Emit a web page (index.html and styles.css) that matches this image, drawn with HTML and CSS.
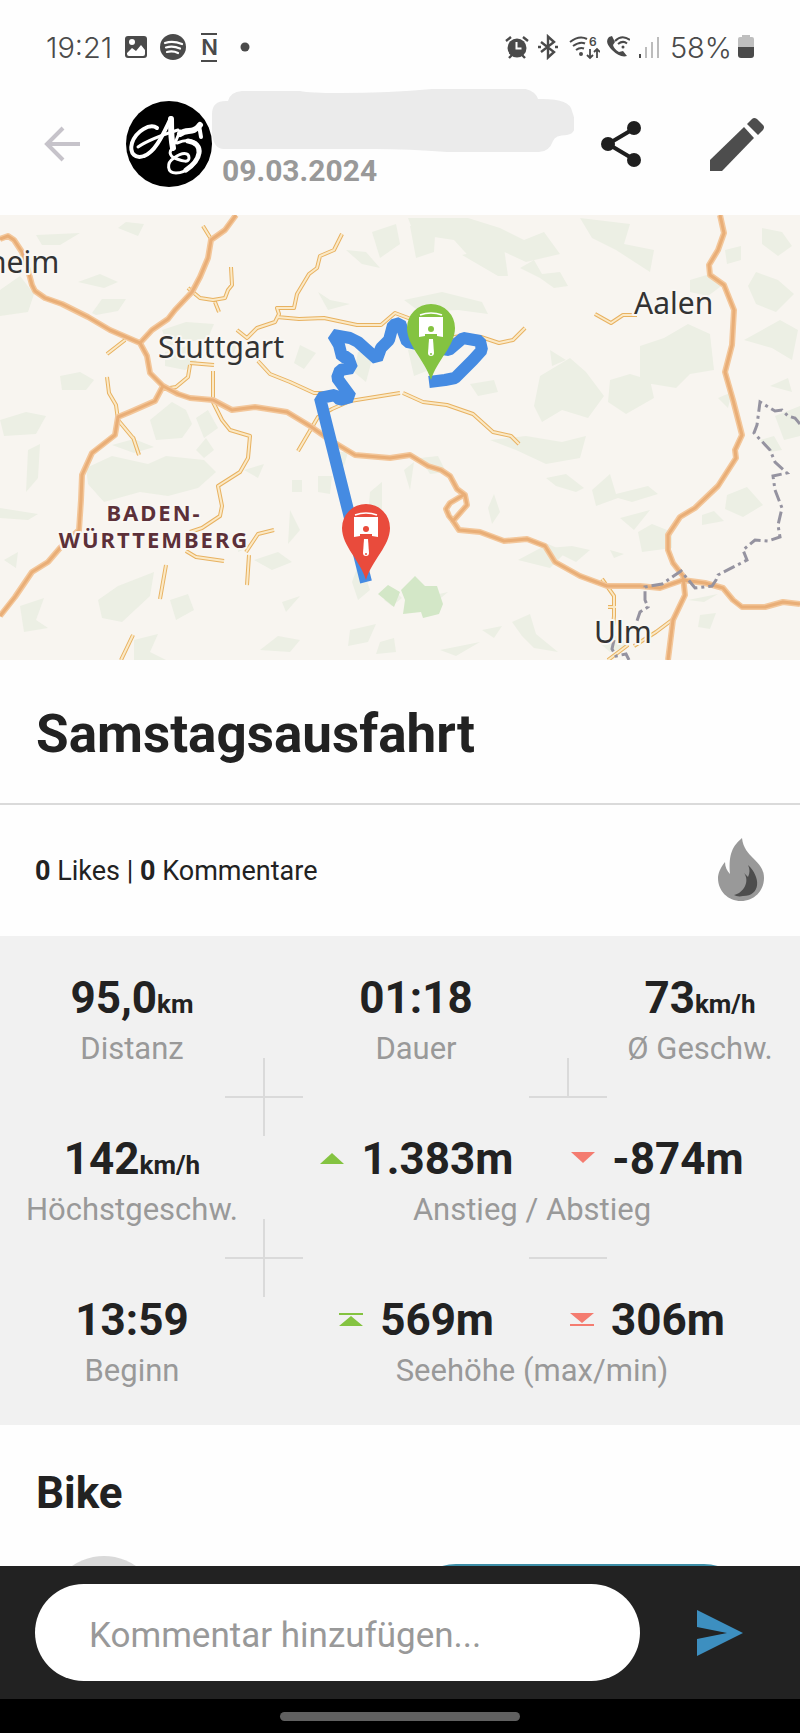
FILE: index.html
```html
<!DOCTYPE html>
<html lang="de">
<head>
    <meta charset="UTF-8">
    <meta name="viewport" content="width=device-width, initial-scale=1.0">
    <title>Samstagsausfahrt</title>
    <link rel="stylesheet" href="styles.css">
</head>
<body>

    <div class="status-bar">
        <div class="status-group status-left">
            <span class="status-text">19:21</span>
            <svg width="26" height="26" viewBox="0 0 26 26">
                <rect x="2" y="2" width="22" height="22" rx="3" fill="#4a4a4a"/>
                <circle cx="9" cy="8" r="3" fill="#fff"/>
                <path d="M4 19l5-5 4 3 5-6 4 5v4q0 2-2 2H6q-2 0-2-2z" fill="#fff"/>
            </svg>
            <svg width="26" height="26" viewBox="0 0 26 26">
                <circle cx="13" cy="13" r="13" fill="#4a4a4a"/>
                <path d="M5 9q8-2.500 17 1M6 13.500q7-2 14 1M7 18q6-1.500 11 1" fill="none" stroke="#fff" stroke-width="2.200" stroke-linecap="round"/>
            </svg>
            <span class="n-icon">N</span>
            <svg width="26" height="26" viewBox="0 0 26 26"><circle cx="13" cy="13" r="4.500" fill="#4a4a4a"/></svg>
        </div>
        <div class="status-group status-right">
            <svg width="26" height="26" viewBox="0 0 26 26">
                <circle cx="13" cy="14" r="9.500" fill="#4a4a4a"/>
                <path d="M2 7l5-4M24 7l-5-4M5 24l3-3M21 24l-3-3" stroke="#4a4a4a" stroke-width="2.400"/>
                <path d="M12.500 8v6.500h5" fill="none" stroke="#fff" stroke-width="2"/>
            </svg>
            <svg width="24" height="26" viewBox="0 0 24 26" fill="none" stroke="#4a4a4a" stroke-width="2.400">
                <path d="M5 8l13 10-6 5.500v-21L18 8 5 18"/>
                <path d="M2 13h3M19 13h3"/>
            </svg>
            <svg width="34" height="26" viewBox="0 0 34 26" fill="none" stroke="#4a4a4a" stroke-width="2">
                <path d="M4 8q9-7 17-3M7 12q7-5 12-2.500M10 16q4-3 8-1.500"/>
                <circle cx="15" cy="20" r="1" fill="#4a4a4a"/>
                <path d="M24 15v9M21 21l3 3 3-3M31 24v-9M28 18l3-3 3 3" stroke-width="1.800"/>
                <text x="23" y="12" class="wifi-gen">6</text>
            </svg>
            <svg width="24" height="26" viewBox="0 0 24 26">
                <path d="M3 3q-5 5 3 13t15 6l-4-5-4 1q-5-3-6-7l2-3-3-6z" fill="#4a4a4a"/>
                <path d="M9 7q7-7 15-1M12 10q5-4 9-.500" fill="none" stroke="#4a4a4a" stroke-width="2"/>
                <circle cx="17" cy="13" r="1.500" fill="#4a4a4a"/>
            </svg>
            <svg width="28" height="26" viewBox="0 0 28 26">
                <rect x="3" y="20" width="2" height="4" fill="#4a4a4a"/>
                <path d="M10 13v11M16 8v16M22 3v21" stroke="#bcbcbc" stroke-width="2"/>
            </svg>
            <span class="status-text">58%</span>
            <svg width="16" height="26" viewBox="0 0 16 26">
                <path d="M0 14V5q0-2 2-2h2V1h8v2h2q2 0 2 2v9z" fill="#bfbfbf"/>
                <path d="M0 13h16v8q0 3-3 3H3q-3 0-3-3z" fill="#4a4a4a"/>
            </svg>
        </div>
    </div>

    <header class="header">
        <button class="icon-button" aria-label="Zurück">
            <svg width="36" height="36" viewBox="0 0 36 36" fill="none" stroke="#c6c3ca" stroke-width="4">
                <path d="M36 18H3M19 2L3 18l16 16"/>
            </svg>
        </button>
        <svg class="avatar" width="86" height="86" viewBox="0 0 86 86">
            <circle cx="43" cy="43" r="43" fill="#000"/>
            <g fill="none" stroke="#fff" stroke-linecap="round" stroke-linejoin="round">
                <path d="M31 27C24 22 10 30 6 42c-3 11 4 16 12 13C30 51 38 31 45 17" stroke-width="4"/>
                <path d="M45 18c0 10 0 20 2 29" stroke-width="6"/>
                <path d="M12 46c10-7 24-12 40-17" stroke-width="3"/>
                <path d="M54 30l-5 12" stroke-width="3"/>
                <path d="M54 33c8-6 12 1 20-9" stroke-width="6"/>
                <path d="M73 24l2 12" stroke-width="4"/>
                <path d="M51 42c12-5 22-2 22 8 0 12-13 22-23 22-9 0-10-10-2-15 8-6 15-6 15 0 0 5-7 3-12 1-7-2-9-7-4-11" stroke-width="3"/>
                <path d="M62 40c8 1 12 6 11 12-1 7-7 13-13 17" stroke-width="5"/>
            </g>
        </svg>
        <div class="user">
            <svg width="362" height="64" viewBox="0 0 362 64">
                <path d="M16 12Q18 3 30 2l58 0q10 2 40 2 50 0 92-4l80-1q22-1 26 11 32-1 34 12 8 22-5 24-12 0-14 6-4 11-14 11l-92 0q-38-3-72-3H13Q2 61 0 45V25Q0 11 16 12z" fill="#ebebeb"/>
            </svg>
            <span class="date">09.03.2024</span>
        </div>
        <button class="icon-button" aria-label="Teilen">
            <svg width="40" height="46" viewBox="0 0 40 46" fill="#1f1f1f">
                <path d="M34 7L7 23l27 16" fill="none" stroke="#1f1f1f" stroke-width="4"/>
                <circle cx="33" cy="7" r="7"/>
                <circle cx="7" cy="23" r="7"/>
                <circle cx="33" cy="39" r="7"/>
            </svg>
        </button>
        <button class="icon-button" aria-label="Bearbeiten">
            <svg width="54" height="54" viewBox="0 0 54 54" fill="#4d4d4d">
                <path d="M0 43L34 10l10 11L12 54H0z"/>
                <path d="M37 7l5-5q2-2 5 0l6 6q2 2 0 5l-5 5z"/>
            </svg>
        </button>
    </header>

    <main class="content">
        <svg class="map" viewBox="0 215 800 445">
            <defs>
                <!-- country roads -->
                <g id="minor">
                    <path d="M203 226l8 13M188 288l12 10 13 2 12-2 3-8 4-5-1-18M215 302l4 10M237 330l10 8 10-10 18-6 4-8-2-6h17l3-14 12-20 8-6 3-12 14-6 8-16M277 317l22 2 25-1 33 7h24l14-12 16 6 10 10 20 10 20-3 20 1 18 6 14-3 12-12"/>
                    <path d="M595 314l16 9 12-8 14 0M107 354l18-14M107 377l2 16 7 12 2 15 15 18M213 371l0 31 9 18 8 10 20 6-2 22-8 14-22 14 4 20-2 10-18 12-12 4M190 365l-2 12-12 10-12 2M190 363l24 2M258 361l12 13 20 8 24 11 8 0 6 0M400 393l-50 8-18 8-14 8-20 34M403 393l20 9 24 3 26 9 20 18 18 4 8 8M133 437l6 18M166 565l-6 34M133 635l-12 25M186 551l10 6 28 4M246 552l12-18 16-4M249 555l-2 30"/>
                    <path d="M602 579l12 17 0 20-2 20M608 607h8M672 620l-16 12-22 14M628 645l-20 15"/>
                </g>
                <!-- motorways -->
                <g id="major">
                    <path d="M0 239l8-3 6 4 8 12 6 18 4 15 3 6 10 7 17 6 26 13 22 13 30 13 7 13 3 17 13 13 15 8 12 4 23 2 19 10 23-3 32 5 23 14 20 14 25 15 35 3 20-3 18 11 13 4 9 6 7 13 8 6 2 10-7 8-7 8 6 9 21 2 24 9 23-2 18 7 10 16 25 14 27 10h33l20 2 23-8 22 3 18 5 10 12 9 7h23l18-5 17 2"/>
                    <path d="M465 494l-15 9-4 6 3 7 4 5M236 215l-11 15-14 10-3 18-8 19-8 15-17 18-7 9-16 11-12 13M163 386l-8 15-25 11-12 5-3 18-23 18-10 22-1 25-2 30-19 18-12 14-16 10-17 25-15 19"/>
                    <path d="M720 215l4 18-6 17-9 15 1 10 14 10 10 25-2 35-7 27 8 28 9 35-7 15 1 8-18 28-23 22-15 9-12 18v15l5 13 10 13 2 19-12 25-5 40"/>
                </g>
                <g id="piston" fill="#fff">
                    <path d="M419 317h24v20l-6-1v-2h-12v2l-6 1z"/>
                    <path d="M420 315q11-4 22 0" fill="none" stroke="#fff" stroke-width="1.500"/>
                    <path d="M429 339h4l1 14a3 3 0 1 1-6 0z"/>
                </g>
            </defs>

            <rect x="0" y="215" width="800" height="445" fill="#f8f5f0"/>

            <!-- woods -->
            <g fill="#ecefe4">
                <path d="M0 290l20-14 14 18-6 18-28 4zM36 235l44-2-20 12h-18zM78 282l22-8 18 8-14 6zM92 313l10-14 24 0-8 12-22 4zM118 228l8-6 18 2-6 12z"/>
                <path d="M162 330l24-8 28 2-6 14-40 8zM165 352l22-6 10 16-12 8-20-4zM150 420l22-18 14 8 6 14-10 14-26 2zM196 418l12-8 10 18-14 10zM0 420l26-8 20 4-10 18-32 2zM60 376l20-4 14 8-8 10-24 0z"/>
                <path d="M86 468l26-12 36 8 18-8 38 4 12 12-18 16-30 8-28-4-36 10-16-18zM112 445l22-6 20 8-20 6zM28 450l12-6-2 34-12 14zM0 508l38 6-10 6-28-2zM98 600l20-14 36-14-4 24-28 26-20-4zM20 606l24-8-8 22 12 8-24 4zM134 640l24-6-8 18 16 8h-32zM170 600l18-6 6 16-18 10zM4 560l14-8-2 16z"/>
                <path d="M254 560l24-8 14 10-20 8zM282 602l18-6-14 16zM290 510l10 20-12 14zM292 480h10v12h-10zM318 476l14 0-2 18-12-2zM318 292l12 8 20 4-22 6zM346 250l20 2 14 16-18-4zM372 232l24-8 4 20-20 14zM358 352l16 0-8 30-12-10zM336 452l12 0-4 14-8-4zM370 492l12-10 0 28-14 6zM350 630l26-6-8 18-20 4zM260 650l18-14 22 4-10 12z"/>
                <path d="M408 218l60 0 32 10 24 12 20-8 16 22-34 8-26-12-26 12-20-22-40-6zM580 218l50 6-6 20 30 6-4 22-34-22-24-12zM410 226l26-6-2 32-18 6zM462 255l20-5 14-12 8 10 4 28-10 0zM520 268l14-8 8 14 18-2 8 14-14 2-14-10zM404 300l38-8 40 10 6 12-30-4-38 2z"/>
                <path d="M408 350l20-8 14 6-8 20-20 8zM470 384l24-4 4 12-20 4zM540 376l30-18 16 14 18 24-16 22-26-8-20 12-8-16zM640 346l24-8 24-14 22 10 4 36-24 4-14 14-36-6zM610 380l20-6 20 6 4 18-28 16-18-12zM550 350l16 10-14 6zM725 250l16-4v14l-14 4zM690 280l20-6 14 10-16 12-18-4zM756 272l22 8 16 14-18 18-20-8-8-18zM744 340l36-20 18 10-6 30-20-12zM762 228l20 4 10 14-14 10-16-12zM775 416l25-10v30l-16 4z"/>
                <path d="M490 440l36-4 36 6 24-6-6 22-34 6-30-14zM546 478l20-4 18 14-8 4-20-6zM592 490l18-16 6 20 32-8 10 8-26 8-14-4-22 8zM620 518l30-8-16 20zM638 532l14-8 20 8 0 16-30 4zM727 495l20-8 16 18-20 12-18-8zM702 515l12-4 10 10-22 4zM688 600l30-6-14 8-16-2zM700 615l16-2-6 16-12-2zM518 560l30-16 18 8-16 16zM548 548l24-2 18 4-14 12zM404 470l10-8-4 28zM420 458l18-2 8 16-16 2zM488 508l6-14 6 18-8 12zM482 630l20-4-8 12zM512 622l18-8 6 20 22 18-24-4-12-12zM440 650l40-8-24 14zM610 550l14 4-10 4z"/>
                <path d="M196 450l10-12 8 12-10 8zM244 470l20-6-6 14zM240 540l12 6-14 6zM360 560l10 30-12 10-6-18zM384 600l10-10 8 8-10 8zM430 596l18-4-12 10zM380 642l14-4 2 14-20 2zM596 640l20-4 14 10-20 6zM718 398l14-6-4 16zM770 386l18-8 4 14zM760 440l14-4 8 14-12 2zM300 345l16 8-12 16-10-6zM224 342l14 0-6 16z"/>
            </g>
            <path d="M378 594l10-9 12 7-6 15zM401 590l14-14 10 10 12 0 6 18-4 10-16 4-2-6-18 2 2-14z" fill="#d3e7c7"/>

            <use href="#minor" class="road road-edge"/>
            <use href="#minor" class="road road-core"/>
            <use href="#major" class="road motorway-edge"/>
            <use href="#major" class="road motorway-core"/>

            <path class="border" d="M800 424L795 418 788 416 782 410 775 411 760 402 757 425 754 433 770 450 775 462 787 473 773 476 775 490 782 508 778 525 780 537 768 541 755 540 743 550 747 560 718 575 716 580 712 586 695 588 681 571 662 584 645 587 645 600 648 607 640 612 636 624M614 640L612 649 616 656 626 654 629 660"/>

            <path class="route" d="M366 582L320 398 335 395 340 400 351 397 337 378 340 370 352 368 348 357 342 357 339 345 333 335 350 338 358 342 377 359 381 348 389 340 393 325 400 323 407 342 430 347 449 350 463 338 480 341 482 350 473 360 466 367 455 378 445 380 429 382"/>

            <g class="city">
                <text x="-12" y="273">heim</text>
                <text x="158" y="358">Stuttgart</text>
                <text x="634" y="314">Aalen</text>
                <text x="594" y="643">Ulm</text>
            </g>
            <g class="region">
                <text x="154" y="521">BADEN-</text>
                <text x="154" y="548">WÜRTTEMBERG</text>
            </g>

            <path d="M431 380C425 360 407 346 407 328a24 24 0 0 1 48 0C455 346 437 360 431 380z" fill="#84c341"/>
            <path d="M366 580C360 560 342 546 342 528a24 24 0 0 1 48 0C390 546 372 560 366 580z" fill="#e94b3c"/>
            <use href="#piston"/>
            <use href="#piston" x="-65" y="200"/>
            <circle cx="431" cy="329" r="3" fill="#84c341"/>
            <circle cx="431" cy="354" r="1" fill="#84c341"/>
            <circle cx="366" cy="529" r="3" fill="#e94b3c"/>
            <circle cx="366" cy="554" r="1" fill="#e94b3c"/>
        </svg>

        <div class="title-box">
            <h1>Samstagsausfahrt</h1>
        </div>

        <div class="likes">
            <span><b>0</b> Likes | <b>0</b> Kommentare</span>
            <button class="icon-button" aria-label="Like">
                <svg width="48" height="65" viewBox="0 0 48 65">
                    <path d="M25 0C13 10 12 20 13 36 10 33 8 29 8 24 3 30 1 36 1 40c0 13 10 23 23 23s23-10 23-23C47 22 27 20 25 0z" fill="#999"/>
                    <path d="M31 27c13 12 13 31-5 31-4 1-7 0-9-1 10-2 16-14 10-22l4 4c2-4 2-8 0-12z" fill="#4d4d4d"/>
                </svg>
            </button>
        </div>

        <div class="stats">
            <div class="stat cross">
                <p class="value">95,0<small>km</small></p>
                <p class="label">Distanz</p>
            </div>
            <div class="stat cross half">
                <p class="value">01:18</p>
                <p class="label">Dauer</p>
            </div>
            <div class="stat stat-last">
                <p class="value">73<small>km/h</small></p>
                <p class="label">Ø Geschw.</p>
            </div>

            <div class="stat cross">
                <p class="value">142<small>km/h</small></p>
                <p class="label">Höchstgeschw.</p>
            </div>
            <div class="stat wide line">
                <div class="pair">
                    <p class="value"><svg width="24" height="14" viewBox="0 0 24 14"><path d="M0 12L12 1l12 11z" fill="#84c341"/></svg>1.383m</p>
                    <p class="value"><svg width="24" height="14" viewBox="0 0 24 14"><path d="M0 0h24L12 11z" fill="#f47c70"/></svg>-874m</p>
                </div>
                <p class="label">Anstieg / Abstieg</p>
            </div>

            <div class="stat">
                <p class="value">13:59</p>
                <p class="label">Beginn</p>
            </div>
            <div class="stat wide">
                <div class="pair pair-height">
                    <p class="value"><svg width="24" height="14" viewBox="0 0 24 14" fill="#84c341"><path d="M0 0h24v2H0zM0 13L12 3l12 10z"/></svg>569m</p>
                    <p class="value"><svg width="24" height="14" viewBox="0 0 24 14" fill="#f47c70"><path d="M0 0h24L12 10zM0 11h24v2H0z"/></svg>306m</p>
                </div>
                <p class="label">Seehöhe (max/min)</p>
            </div>
        </div>

        <div class="bike">
            <h2>Bike</h2>
            <div class="bike-row">
                <div class="bike-image"></div>
                <div class="bike-action"></div>
            </div>
        </div>
    </main>

    <form class="comment-bar">
        <input type="text" placeholder="Kommentar hinzufügen..." aria-label="Kommentar hinzufügen">
        <button type="button" class="icon-button" aria-label="Senden">
            <svg width="46" height="46" viewBox="0 0 46 46"><path d="M0 0l46 23L0 46V29l30-6-30-6z" fill="#3d8fc0"/></svg>
        </button>
    </form>
    <div class="nav-bar"><div class="nav-pill"></div></div>

</body>
</html>
```

FILE: styles.css
```css
* {
    box-sizing: border-box;
}

body {
    font-family: Roboto, sans-serif;
    background-color: #fefefe;
    color: #222;
    margin: 0;
    height: 100vh;
    display: flex;
    flex-direction: column;
}

h1, h2, p {
    margin: 0;
}

svg {
    display: block;
    flex-shrink: 0;
}

.icon-button {
    background: none;
    border: none;
    padding: 0;
    cursor: pointer;
}

/* status bar */
.status-bar {
    display: flex;
    justify-content: space-between;
    padding: 30px 46px 20px;
    font-family: Inter, sans-serif;
    color: #4a4a4a;
}

.status-group {
    display: flex;
    align-items: center;
    height: 34px;
}

.status-left {
    gap: 11px;
}

.status-right {
    gap: 6px;
}

.status-text {
    font-size: 29px;
    font-weight: 300;
}

.n-icon {
    width: 16px;
    margin: 0 4px;
    border-top: 2px solid #4a4a4a;
    border-bottom: 2px solid #4a4a4a;
    font-size: 22px;
    font-weight: 600;
    line-height: 25px;
    text-align: center;
}

.wifi-gen {
    font-size: 12px;
    font-weight: 600;
    fill: #4a4a4a;
    stroke: none;
}

/* header */
.header {
    display: flex;
    align-items: center;
    padding: 5px 36px 16px 44px;
}

.avatar {
    margin-left: 46px;
}

.user {
    flex: 1;
    padding-bottom: 10px;
}

.date {
    display: block;
    padding-left: 10px;
    font-size: 30px;
    font-weight: 700;
    line-height: 36px;
    color: #999;
}

.header .icon-button:last-child {
    margin-left: 69px;
}

/* page content */
.content {
    flex: 1;
    min-height: 0;
    overflow-y: auto;
    scrollbar-width: none;
}

.map {
    width: 100%;
    height: auto;
}

.road {
    fill: none;
    stroke-linejoin: round;
}

.road-edge {
    stroke: #e8b261;
    stroke-width: 4px;
}

.road-core {
    stroke: #fbe9c6;
    stroke-width: 2px;
}

.motorway-edge {
    stroke: #f3c79b;
    stroke-width: 6px;
}

.motorway-core {
    stroke: #e9ae77;
    stroke-width: 3px;
}

.border {
    fill: none;
    stroke: #9593a0;
    stroke-width: 3px;
    stroke-dasharray: 12 4 3 4;
}

.route {
    fill: none;
    stroke: #458be2;
    stroke-width: 12px;
    stroke-linejoin: bevel;
}

.city, .region {
    font-family: "Noto Sans", sans-serif;
    paint-order: stroke;
    stroke: #f9f7f3;
    stroke-width: 4px;
    stroke-linejoin: round;
}

.city {
    font-size: 30px;
    fill: #333;
}

.region {
    font-size: 22px;
    font-weight: 700;
    letter-spacing: 2px;
    text-anchor: middle;
    fill: #5c3039;
}

.title-box {
    padding: 42px 36px 37px;
    border-bottom: 2px solid #dadada;
}

h1 {
    font-size: 53px;
    line-height: 64px;
}

.likes {
    display: flex;
    justify-content: space-between;
    align-items: center;
    padding: 33px 35px;
    font-size: 27px;
}

/* stats */
.stats {
    display: grid;
    grid-template-columns: 33fr 38fr 29fr;
    padding-bottom: 6px;
    background: #f1f1f1;
    text-align: center;
}

.stat {
    position: relative;
    padding: 36px 0 30px;
    white-space: nowrap;
}

.stat-last {
    padding-left: 32px;
}

.wide {
    grid-column: span 2;
}

.value {
    font-size: 44px;
    font-weight: 700;
    line-height: 52px;
}

.value small {
    font-size: 26px;
    line-height: 26px;
}

.label {
    margin-top: 7px;
    font-size: 31px;
    line-height: 36px;
    color: #999;
}

.pair {
    display: flex;
    justify-content: center;
    gap: 58px;
}

.pair-height {
    gap: 76px;
}

.pair .value {
    display: flex;
    align-items: center;
    gap: 17px;
}

/* grid marks between the cells */
.cross::before, .line::before {
    content: "";
    position: absolute;
    right: -39px;
    bottom: -1px;
    width: 78px;
    height: 2px;
    background: #dadada;
}

.line::before {
    right: 193px;
}

.cross::after {
    content: "";
    position: absolute;
    right: -1px;
    bottom: -39px;
    width: 2px;
    height: 78px;
    background: #dadada;
}

.half::after {
    bottom: 0;
    height: 39px;
}

/* bike */
.bike {
    padding-top: 42px;
}

h2 {
    padding: 0 36px;
    font-size: 44px;
    line-height: 52px;
}

.bike-row {
    display: flex;
    justify-content: space-between;
    margin-top: 37px;
    padding: 0 48px;
}

.bike-image {
    width: 112px;
    height: 112px;
    border-radius: 50%;
    background: #d9d9d9;
}

.bike-action {
    width: 344px;
    height: 96px;
    margin-top: 8px;
    border-radius: 48px;
    background: #3d8fa8;
}

/* comment */
.comment-bar {
    display: flex;
    align-items: center;
    gap: 57px;
    padding: 18px 57px 18px 35px;
    background: #222;
}

.comment-bar input {
    flex: 1;
    min-width: 0;
    height: 97px;
    padding: 6px 54px 0;
    border: none;
    border-radius: 49px;
    background: #fff;
    font-family: inherit;
    font-size: 35px;
}

.comment-bar input::placeholder {
    color: #999;
    opacity: 1;
}

.nav-bar {
    padding: 13px 0 12px;
    background: #000;
}

.nav-pill {
    width: 30%;
    height: 9px;
    margin: 0 auto;
    border-radius: 5px;
    background: #606060;
}
```
